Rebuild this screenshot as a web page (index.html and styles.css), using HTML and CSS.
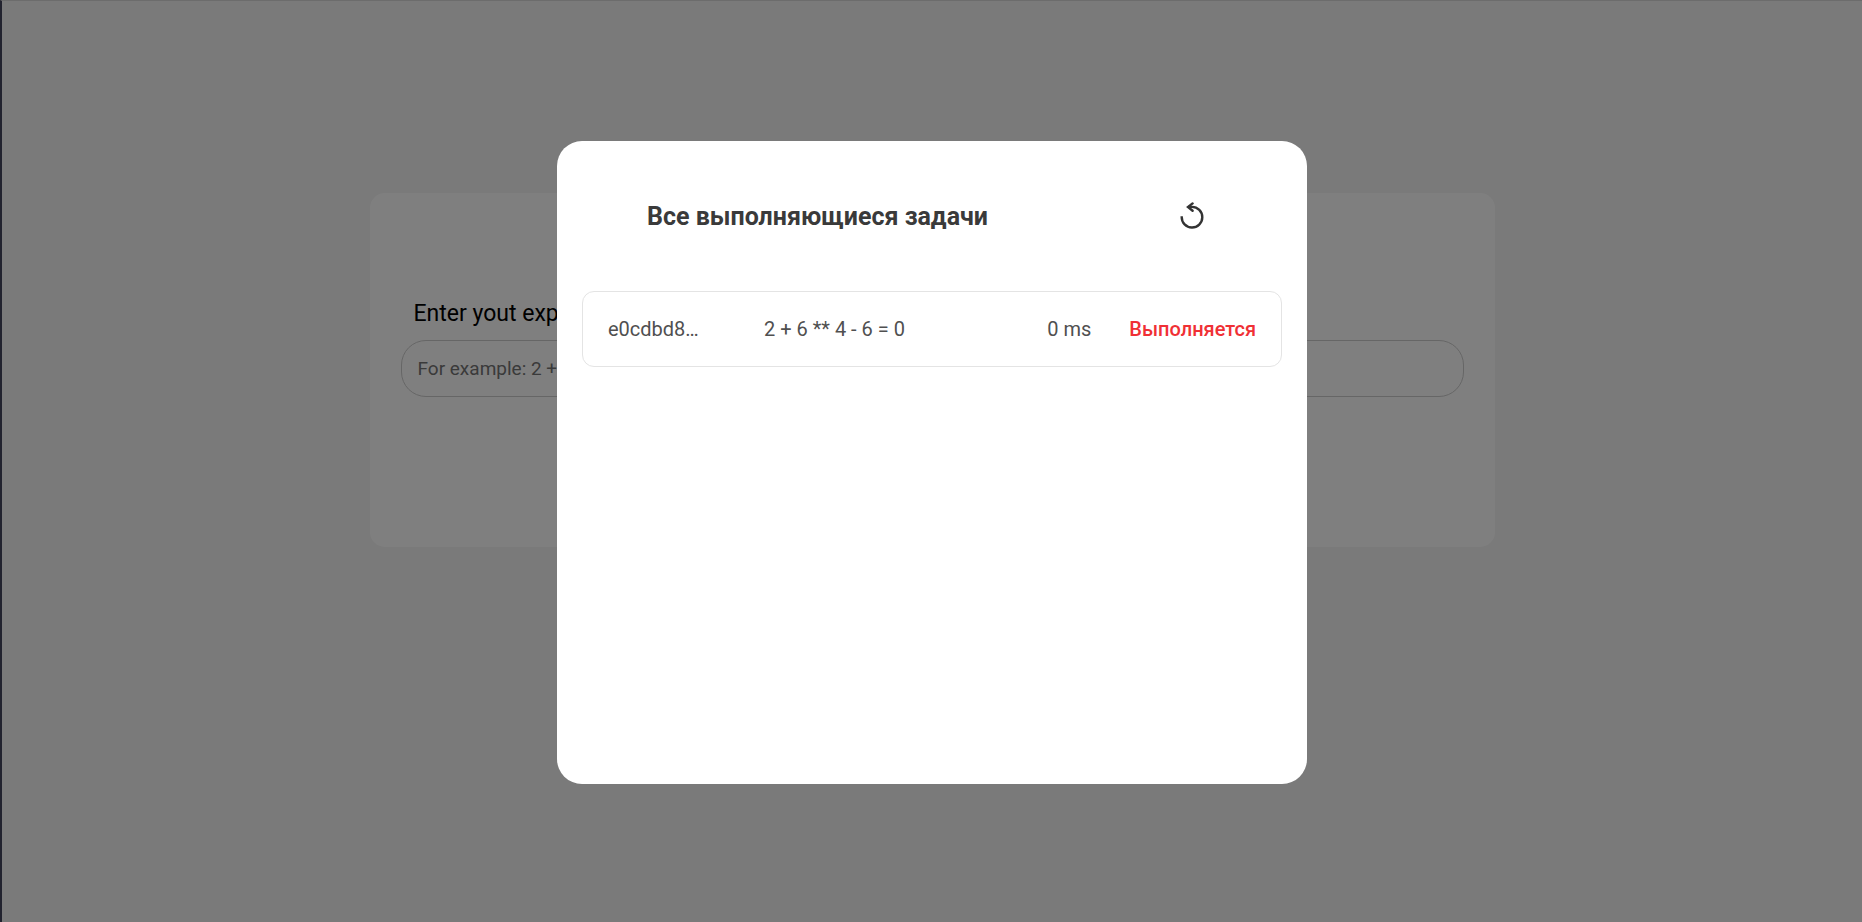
FILE: index.html
```html
<!DOCTYPE html>
<html lang="ru">
<head>
<meta charset="utf-8">
<meta name="viewport" content="width=device-width, initial-scale=1">
<title>Calculator</title>
<link rel="stylesheet" href="styles.css">
</head>
<body>
<main class="page">
  <form class="card">
    <label class="card-label" for="expression">Enter yout expression</label>
    <input class="card-input" id="expression" type="text" placeholder="For example: 2 + 2 * 2">
  </form>
</main>
<div class="overlay">
  <section class="modal" role="dialog" aria-modal="true" aria-labelledby="modal-title">
    <header class="modal-header">
      <h1 class="modal-title" id="modal-title">Все выполняющиеся задачи</h1>
      <button class="refresh" type="button" aria-label="Обновить">
        <svg class="refresh-icon" viewBox="0 0 30 30" aria-hidden="true">
          <path d="M4.7 14.2V15A10.3 10.3 0 1 0 15 4.9H11.5"/>
          <path class="refresh-head" d="M15.6 1.4L11 5L15.6 8.8"/>
        </svg>
      </button>
    </header>
    <ul class="tasks">
      <li class="task">
        <span class="task-id">e0cdbd8…</span>
        <span class="task-expression">2 + 6 ** 4 - 6 = 0</span>
        <span class="task-time">0 ms</span>
        <span class="task-status">Выполняется</span>
      </li>
    </ul>
  </section>
</div>
</body>
</html>
```
FILE: styles.css
```css
* {
  box-sizing: border-box;
}

body {
  margin: 0;
  min-height: 100vh;
  border-top: 1px solid #d8d8d8;
  border-left: 2px solid #44465f;
  background: #f5f5f5;
  color: #000;
  font-family: Roboto, "Open Sans", sans-serif;
  font-size: 20px;
}

.page {
  display: flex;
  justify-content: center;
  padding: 192px 24px 0;
}

.card {
  display: flex;
  flex-direction: column;
  gap: 11px;
  width: 100%;
  max-width: 1125px;
  padding: 106px 31px 150px;
  border-radius: 15px;
  background: #fff;
}

.card-label {
  padding-left: 13px;
  font-size: 23px;
  line-height: 30px;
}

.card-input {
  width: 100%;
  height: 57px;
  padding: 0 16px;
  border: 1px solid #ccc;
  border-radius: 25px;
  background: transparent;
  font: inherit;
  font-size: 19px;
}

.card-input::placeholder {
  color: #757575;
}

.overlay {
  position: fixed;
  inset: 0;
  display: flex;
  align-items: center;
  justify-content: center;
  padding: 3px 0 0 2px;
  background: rgb(0 0 0 / 50%);
}

.modal {
  width: 100%;
  max-width: 750px;
  height: 70%;
  padding: 25px;
  border-radius: 25px;
  background: #fff;
}

.modal-header {
  display: flex;
  align-items: center;
  justify-content: space-between;
  height: 102px;
  padding: 0 75px 0 65px;
}

.modal-title {
  margin: 0;
  color: #3a3a3a;
  font-size: 25px;
  font-weight: 700;
  line-height: 30px;
}

.refresh {
  display: flex;
  padding: 0;
  border: 0;
  background: none;
  cursor: pointer;
}

.refresh-icon {
  width: 30px;
  height: 30px;
  fill: none;
  stroke: #333;
  stroke-width: 2.4;
}

.refresh-head {
  stroke-linecap: round;
}

.tasks {
  margin: 0;
  padding: 23px 0 0;
  list-style: none;
}

.task {
  display: grid;
  grid-template-columns: 156px 1fr auto auto;
  align-items: center;
  min-height: 76px;
  padding: 0 25px;
  border: 1px solid #e4e4e4;
  border-radius: 12px;
  color: #505050;
}

.task-time {
  padding-right: 38px;
}

.task-status {
  color: #f03035;
  font-weight: 500;
}
```
